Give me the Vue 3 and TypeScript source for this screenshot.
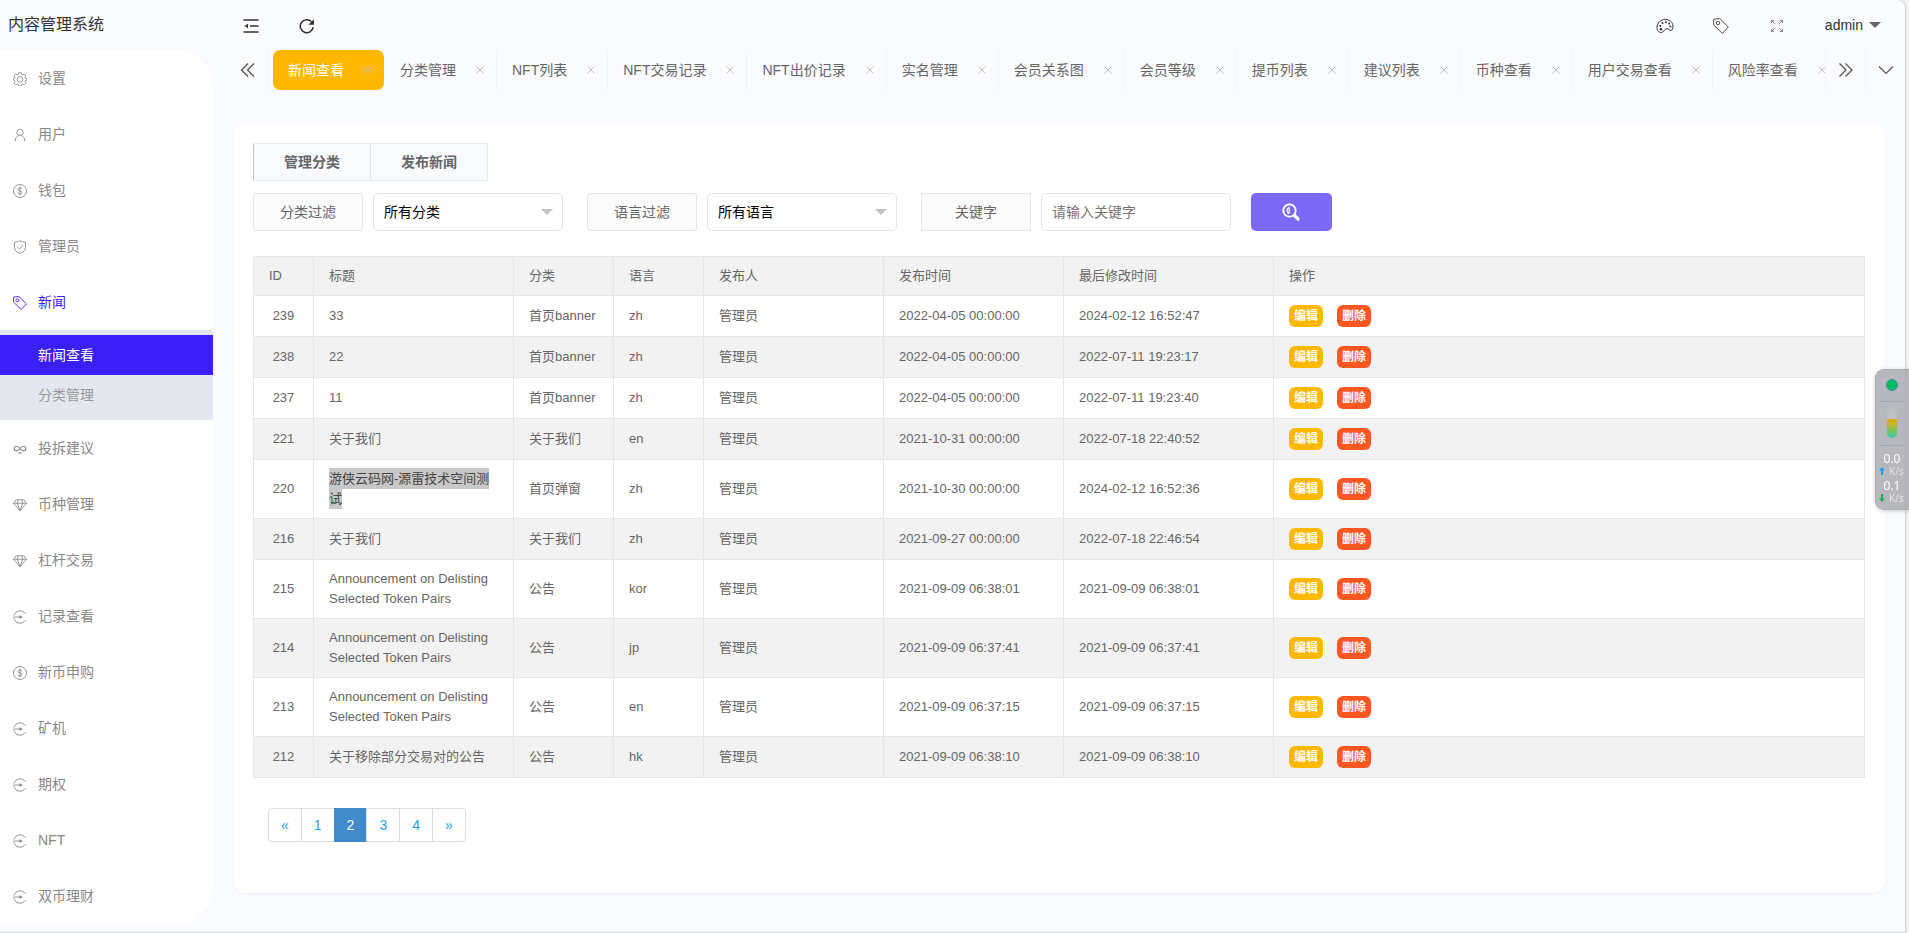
<script setup lang="ts">
import { ref } from 'vue'

type IconName = 'gear' | 'user' | 'dollar' | 'shield' | 'tag' | 'link' | 'diamond' | 'enter'

interface MenuEntry {
  label: string
  icon: IconName
  children?: string[]
}

interface NewsRow {
  id: number
  title: string
  category: string
  lang: string
  created: string
  updated: string
  marked?: boolean
}

const menu: MenuEntry[] = [
  { label: '设置', icon: 'gear' },
  { label: '用户', icon: 'user' },
  { label: '钱包', icon: 'dollar' },
  { label: '管理员', icon: 'shield' },
  { label: '新闻', icon: 'tag', children: ['新闻查看', '分类管理'] },
  { label: '投拆建议', icon: 'link' },
  { label: '币种管理', icon: 'diamond' },
  { label: '杠杆交易', icon: 'diamond' },
  { label: '记录查看', icon: 'enter' },
  { label: '新币申购', icon: 'dollar' },
  { label: '矿机', icon: 'enter' },
  { label: '期权', icon: 'enter' },
  { label: 'NFT', icon: 'enter' },
  { label: '双币理财', icon: 'enter' },
]

const tabs: string[] = [
  '新闻查看', '分类管理', 'NFT列表', 'NFT交易记录', 'NFT出价记录', '实名管理', '会员关系图',
  '会员等级', '提币列表', '建议列表', '币种查看', '用户交易查看', '风险率查看',
]

const delisting = 'Announcement on Delisting Selected Token Pairs'
const rows: NewsRow[] = [
  { id: 239, title: '33', category: '首页banner', lang: 'zh', created: '2022-04-05 00:00:00', updated: '2024-02-12 16:52:47' },
  { id: 238, title: '22', category: '首页banner', lang: 'zh', created: '2022-04-05 00:00:00', updated: '2022-07-11 19:23:17' },
  { id: 237, title: '11', category: '首页banner', lang: 'zh', created: '2022-04-05 00:00:00', updated: '2022-07-11 19:23:40' },
  { id: 221, title: '关于我们', category: '关于我们', lang: 'en', created: '2021-10-31 00:00:00', updated: '2022-07-18 22:40:52' },
  { id: 220, title: '游侠云码网-源雷技术空间测试', category: '首页弹窗', lang: 'zh', created: '2021-10-30 00:00:00', updated: '2024-02-12 16:52:36', marked: true },
  { id: 216, title: '关于我们', category: '关于我们', lang: 'zh', created: '2021-09-27 00:00:00', updated: '2022-07-18 22:46:54' },
  { id: 215, title: delisting, category: '公告', lang: 'kor', created: '2021-09-09 06:38:01', updated: '2021-09-09 06:38:01' },
  { id: 214, title: delisting, category: '公告', lang: 'jp', created: '2021-09-09 06:37:41', updated: '2021-09-09 06:37:41' },
  { id: 213, title: delisting, category: '公告', lang: 'en', created: '2021-09-09 06:37:15', updated: '2021-09-09 06:37:15' },
  { id: 212, title: '关于移除部分交易对的公告', category: '公告', lang: 'hk', created: '2021-09-09 06:38:10', updated: '2021-09-09 06:38:10' },
]

const pages: string[] = ['«', '1', '2', '3', '4', '»']
const currentPage = ref('2')
const activeTab = ref('新闻查看')
const keyword = ref('')
</script>

<template>
  <div class="frame">
    <aside class="side">
      <h1 class="brand">内容管理系统</h1>
      <nav class="menu">
        <template v-for="item in menu" :key="item.label">
          <a href="#" class="menu-item" :class="{ open: item.children }">
            <svg class="menu-icon" viewBox="0 0 16 16">
              <template v-if="item.icon === 'gear'">
                <path d="M6.6.8h2.8l.5 2.1 1.100.5 1.900-1.100 1.900 1.900-1.100 1.900.5 1.100 2 .5v1.600l-2 .5-.5 1.100 1.100 1.900-1.900 1.900-1.900-1.100-1.100.5-.5 2.100H6.600l-.5-2.100-1.100-.5-1.900 1.100-1.900-1.900 1.100-1.900-.5-1.100-1.500-.5V7.700l1.500-.5.5-1.100-1.100-1.900 1.900-1.900L5 3.400l1.100-.5z" />
                <circle cx="8" cy="8.500" r="3.200" />
              </template>
              <template v-else-if="item.icon === 'user'">
                <circle cx="8" cy="5" r="3.600" />
                <path d="M2.500 15c.2-3.800 1.800-5.600 4-6.300M13.500 15c-.2-3.800-1.800-5.600-4-6.300" />
              </template>
              <template v-else-if="item.icon === 'dollar'">
                <circle cx="8" cy="8" r="7.400" />
                <path d="M10.300 6c-.2-1-1.100-1.500-2.300-1.500-1.300 0-2.300.6-2.300 1.700C5.700 8.800 10.400 7.200 10.400 9.800c0 1.100-1 1.700-2.400 1.700s-2.300-.6-2.500-1.700M8 3v10" />
              </template>
              <template v-else-if="item.icon === 'shield'">
                <path d="M8 .8c2 1.200 4 1.600 6.300 1.700v6c0 3.200-2.600 5.500-6.300 6.900C4.300 14 1.700 11.700 1.700 8.500v-6C4 2.400 6 2 8 .8z" />
                <path d="M4.800 7.800l2.500 2.500 4.300-4.500" />
              </template>
              <template v-else-if="item.icon === 'tag'">
                <path d="M.7 1.200L6.800.6l8.600 8.400-6 6.400L.7 7z" />
                <circle cx="5" cy="5" r="1.700" />
              </template>
              <template v-else-if="item.icon === 'link'">
                <path d="M8 7.500C6.800 5.500 5.500 4.800 4 4.800a2.700 2.700 0 0 0 0 5.400c1.500 0 2.800-.7 4-2.700s2.500-2.700 4-2.700a2.700 2.700 0 0 1 0 5.400c-1.300 0-2.500-.5-3.500-1.900M6 12.500h4" stroke-width="1.300" />
              </template>
              <template v-else-if="item.icon === 'diamond'">
                <path d="M3.500 2h9L15.500 6 8 14.500.5 6zM.5 6h15M5 6l3 8.500L11 6M5 6l1-4M11 6l-1-4" />
              </template>
              <template v-else>
                <path d="M14.200 4.500A7.200 7.200 0 0 0 1 6.500M1 9.500a7.200 7.200 0 0 0 13.200 2M0 8h9" />
                <path class="solid" d="M7.500 5.800L11 8l-3.500 2.200z" />
              </template>
            </svg>
            <span>{{ item.label }}</span>
          </a>
          <div v-if="item.children" class="submenu">
            <a
              v-for="child in item.children"
              :key="child"
              href="#"
              class="sub-item"
              :class="{ current: child === activeTab }"
            >{{ child }}</a>
          </div>
        </template>
      </nav>
    </aside>

    <main class="main">
      <header class="topbar">
        <button type="button" class="tool" aria-label="收起菜单">
          <svg width="16" height="16" viewBox="0 0 16 16" class="stroke-dark">
            <path d="M.5 2h15M7 8h8.500M.5 14h15" stroke-width="1.400" />
            <path class="dark" d="M5 5.800v4.400L1.500 8z" />
          </svg>
        </button>
        <button type="button" class="tool" aria-label="刷新">
          <svg width="16" height="16" viewBox="0 0 16 16" class="stroke-dark">
            <path d="M14.200 9.200A6.500 6.500 0 1 1 12.500 3.700" stroke-width="1.500" />
            <path class="dark" d="M15 1.200v5.600H9.400z" />
          </svg>
        </button>
        <span class="spacer"></span>
        <button type="button" class="tool" aria-label="主题">
          <svg width="18" height="16" viewBox="0 0 18 16" class="stroke-dark">
            <path d="M5.500 14.500C3 15 1 12.500 1 9.500 1 5 4.500 1.500 9.300 1.500c4.500 0 7.700 3 7.700 6.700 0 2.300-.7 4.300-2.200 4.300-1.700 0-1.800-1.900-3.800-1.900-2.500 0-2.500 3.300-5.500 3.900z" />
            <circle class="dark" cx="4.300" cy="8" r="1" />
            <circle class="dark" cx="6.500" cy="5" r="1" />
            <circle class="dark" cx="10" cy="4.200" r="1" />
            <circle class="dark" cx="13.200" cy="5.500" r="1" />
            <circle class="dark" cx="14.300" cy="8.500" r="1" />
            <circle class="dark" cx="5" cy="11.300" r="1.300" />
          </svg>
        </button>
        <button type="button" class="tool" aria-label="便签">
          <svg width="16" height="16" viewBox="0 0 16 16" class="stroke-mid">
            <path d="M.7 1.200L6.800.6l8.600 8.400-6 6.400L.7 7z" />
            <circle cx="5" cy="5" r="1.700" />
          </svg>
        </button>
        <button type="button" class="tool" aria-label="全屏">
          <svg width="14" height="14" viewBox="0 0 14 14" class="stroke-light">
            <path d="M1.500 4V1.500H4M1.500 1.500l3.500 3.500M10 1.500h2.500V4M12.500 1.500L9 5M1.500 10v2.500H4M1.500 12.500L5 9M12.500 10v2.500H10M12.500 12.500L9 9" />
          </svg>
        </button>
        <button type="button" class="account">
          admin
          <svg width="12" height="6" viewBox="0 0 12 6"><path d="M0 0h12L6 6z" /></svg>
        </button>
      </header>

      <div class="tabbar">
        <button type="button" class="scroll prev" aria-label="向左">
          <svg width="16" height="16" viewBox="0 0 16 16" class="stroke-mid"><path d="M8 1.500L1.500 8 8 14.500M14 1.500L7.500 8l6.500 6.500" stroke-width="1.300" /></svg>
        </button>
        <ul class="tabs">
          <li v-for="tab in tabs" :key="tab" class="tab" :class="{ on: tab === activeTab }">
            <a href="#" @click.prevent="activeTab = tab">{{ tab }}</a>
            <button type="button" class="close" :aria-label="'关闭' + tab">
              <svg width="8" height="8" viewBox="0 0 8 8"><path d="M.5.5l7 7M7.500.5l-7 7" /></svg>
            </button>
          </li>
        </ul>
        <button type="button" class="scroll" aria-label="向右">
          <svg width="16" height="16" viewBox="0 0 16 16" class="stroke-mid"><path d="M1.500 1.500L8 8l-6.500 6.500M7.500 1.500L14 8l-6.500 6.500" stroke-width="1.300" /></svg>
        </button>
        <button type="button" class="scroll" aria-label="更多">
          <svg width="16" height="16" viewBox="0 0 16 16" class="stroke-mid"><path d="M1 4.500L8 11.500l7-7" stroke-width="1.200" /></svg>
        </button>
      </div>

      <section class="card">
        <div class="actions">
          <button type="button">管理分类</button>
          <button type="button">发布新闻</button>
        </div>

        <form class="filters" @submit.prevent>
          <div class="field">
            <label for="category">分类过滤</label>
            <div class="select">
              <select id="category"><option>所有分类</option></select>
              <svg width="12" height="6" viewBox="0 0 12 6"><path d="M0 0h12L6 6z" /></svg>
            </div>
          </div>
          <div class="field">
            <label for="language">语言过滤</label>
            <div class="select">
              <select id="language"><option>所有语言</option></select>
              <svg width="12" height="6" viewBox="0 0 12 6"><path d="M0 0h12L6 6z" /></svg>
            </div>
          </div>
          <div class="field">
            <label for="keyword">关键字</label>
            <input id="keyword" v-model="keyword" type="text" placeholder="请输入关键字">
          </div>
          <button type="submit" class="search" aria-label="搜索">
            <svg width="18" height="18" viewBox="0 0 18 18">
              <circle cx="7.500" cy="7.500" r="6.200" stroke-width="1.800" />
              <path d="M12.500 12.500l3.500 3.500" stroke-width="3.200" />
              <path d="M7 4.500C4.500 5 4.500 10 7 10.500M7.200 5v5" stroke-width="1.200" />
            </svg>
          </button>
        </form>

        <table class="grid">
          <colgroup>
            <col class="w-id"><col class="w-title"><col class="w-cat"><col class="w-lang">
            <col class="w-date"><col class="w-date"><col class="w-edit"><col>
          </colgroup>
          <thead>
            <tr>
              <th>ID</th><th>标题</th><th>分类</th><th>语言</th>
              <th>发布人</th><th>发布时间</th><th>最后修改时间</th><th>操作</th>
            </tr>
          </thead>
          <tbody>
            <tr v-for="row in rows" :key="row.id">
              <td class="center">{{ row.id }}</td>
              <td><span :class="{ marked: row.marked }">{{ row.title }}</span></td>
              <td>{{ row.category }}</td>
              <td>{{ row.lang }}</td>
              <td>管理员</td>
              <td>{{ row.created }}</td>
              <td>{{ row.updated }}</td>
              <td>
                <div class="ops">
                  <button type="button" class="edit">编辑</button>
                  <button type="button" class="remove">删除</button>
                </div>
              </td>
            </tr>
          </tbody>
        </table>

        <nav class="pager" aria-label="分页">
          <a v-for="p in pages" :key="p" href="#" :class="{ active: p === currentPage }">{{ p }}</a>
        </nav>
      </section>
    </main>

    <div class="monitor">
      <div class="cell"><span class="dot"></span></div>
      <div class="cell level"><span class="tube"></span></div>
      <div class="speeds">
        <div class="speed">
          <span class="num">0.0</span>
          <span class="unit">
            <svg width="6" height="8" viewBox="0 0 6 8" class="up"><path d="M3 0l3 3.500H4V8H2V3.500H0z" /></svg>K/s
          </span>
        </div>
        <div class="speed">
          <span class="num">0.1</span>
          <span class="unit">
            <svg width="6" height="8" viewBox="0 0 6 8" class="down"><path d="M3 8L0 4.500h2V0h2v4.500h2z" /></svg>K/s
          </span>
        </div>
      </div>
    </div>
  </div>
</template>

<style>
body {
  margin: 0;
  background: #f2f3f4;
}
</style>

<style scoped>
.frame,
.frame * {
  box-sizing: border-box;
}

.frame {
  display: flex;
  min-height: 100vh;
  margin-right: 4px;
  background: #f9fbff;
  border-bottom: 1px solid #d2d5d6;
  border-top-right-radius: 8px;
  box-shadow: 1px 0 2px #c9cbce;
  color: #666;
  font: 14px/20px "Liberation Sans", "Noto Sans CJK SC", sans-serif;
}

button,
input,
select {
  margin: 0;
  font: inherit;
}

button {
  padding: 0;
  border: 0;
  background: none;
  color: inherit;
  cursor: pointer;
}

a {
  color: inherit;
  text-decoration: none;
}

svg {
  display: block;
  flex: none;
}

/* Sidebar */
.side {
  flex: none;
  width: 213px;
  padding-bottom: 8px;
}

.brand {
  height: 50px;
  margin: 0;
  padding-left: 8px;
  color: #333;
  font-size: 16px;
  font-weight: 400;
  line-height: 50px;
}

.menu {
  background: #fff;
  border-radius: 0 36px 36px 0;
}

.menu-item {
  display: flex;
  align-items: center;
  gap: 11px;
  height: 56px;
  padding-left: 13px;
  color: #888;
}

.menu-item.open {
  color: #3b1ff7;
}

.menu-icon {
  width: 14px;
  height: 14px;
  margin-top: 2px;
  fill: none;
  stroke: currentColor;
  stroke-width: 1;
}

.menu-icon .solid {
  fill: currentColor;
  stroke: none;
}

.submenu {
  padding: 5px 0;
  background: #e4e7ee;
  border-radius: 0 2px 2px 0;
}

.sub-item {
  display: block;
  height: 40px;
  padding-left: 38px;
  color: #999;
  line-height: 40px;
}

.sub-item.current {
  background: #3b1ff7;
  color: #fff;
}

/* Top bar */
.main {
  flex: 1;
  min-width: 0;
  padding-bottom: 39px;
}

.topbar {
  display: flex;
  align-items: center;
  height: 50px;
  padding: 2px 24px 0 10px;
}

.tool {
  display: flex;
  align-items: center;
  justify-content: center;
  width: 56px;
  height: 40px;
}

.spacer {
  flex: 1;
}

.account {
  display: flex;
  align-items: center;
  gap: 6px;
  margin-left: 20px;
  padding-bottom: 2px;
  color: #333;
}

.account svg {
  fill: #666;
}

.stroke-dark {
  fill: none;
  stroke: #333;
}

.stroke-mid {
  fill: none;
  stroke: #555;
}

.stroke-light {
  fill: none;
  stroke: #888;
}

.dark {
  fill: #333;
  stroke: none;
}

/* Tabs */
.tabbar {
  display: flex;
  height: 40px;
  padding-left: 15px;
}

.scroll {
  display: flex;
  flex: none;
  align-items: center;
  justify-content: center;
  width: 40px;
  border-left: 1px solid #f3f4f6;
}

.scroll.prev {
  border-right: 1px solid #f3f4f6;
  border-left: 0;
}

.tabs {
  display: flex;
  flex: 1;
  min-width: 0;
  margin: 0;
  padding: 0 0 0 5px;
  overflow: hidden;
  list-style: none;
}

.tab {
  display: flex;
  flex: none;
  align-items: center;
  gap: 20px;
  padding: 0 12px 0 15px;
  border-right: 1px solid #f3f4f6;
}

.tab.on {
  margin-right: 1px;
  background: #ffb800;
  border-right: 0;
  border-radius: 7px;
  color: #fff;
}

.close svg {
  fill: none;
  stroke: #c2c2c2;
}

/* Content card */
.card {
  margin: 35px 20px 0;
  padding: 18px 20px 51px;
  background: #fff;
  border-radius: 12px;
  box-shadow: 0 1px 2px #eceef2;
}

.actions {
  display: flex;
}

.actions button {
  height: 38px;
  padding: 0 30px;
  background: #f9fbff;
  border: 1px solid #e0ebef;
  border-left-width: 0;
  border-radius: 0 2px 2px 0;
  font-weight: 700;
}

.actions button:first-child {
  border-left: 1px solid #c0c4c8;
  border-radius: 2px 0 0 2px;
}

.filters {
  display: flex;
  gap: 20px;
  margin-top: 12px;
}

.field {
  display: flex;
  gap: 10px;
}

.field + .field {
  margin-left: 4px;
}

.field label {
  width: 110px;
  height: 38px;
  background: #fbfbfb;
  border: 1px solid #e6e6e6;
  border-radius: 2px;
  line-height: 36px;
  text-align: center;
}

.select {
  position: relative;
}

.select svg {
  position: absolute;
  top: 16px;
  right: 10px;
  fill: #c2c2c2;
  pointer-events: none;
}

.field select,
.field input {
  width: 190px;
  height: 38px;
  padding: 0 10px;
  appearance: none;
  background: #fff;
  border: 1px solid #e6e6e6;
  border-radius: 5px;
  color: #000;
}

.field input::placeholder {
  color: #757575;
}

.search {
  display: flex;
  align-items: center;
  justify-content: center;
  width: 81px;
  height: 38px;
  padding-right: 2px;
  background: #7c69f8;
  border-radius: 5px;
}

.search svg {
  fill: none;
  stroke: #fff;
  stroke-linecap: round;
}

/* News table */
.grid {
  width: 100%;
  margin-top: 25px;
  border-collapse: collapse;
  table-layout: fixed;
  font-size: 13px;
}

.w-id { width: 60px; }
.w-title { width: 200px; }
.w-cat { width: 100px; }
.w-lang { width: 90px; }
.w-date { width: 180px; }
.w-edit { width: 210px; }

.grid th,
.grid td {
  padding: 9px 15px;
  border: 1px solid #e6e6e6;
  font-weight: 400;
  text-align: left;
}

.grid th,
.grid tbody tr:nth-child(even) {
  background: #f2f2f2;
}

.grid .center {
  text-align: center;
}

.marked {
  padding: 3px 0;
  background: #c8c8c8;
  color: #444;
}

.ops {
  display: flex;
  gap: 14px;
}

.ops button {
  height: 22px;
  padding: 0 5px;
  border-radius: 6px;
  color: #fff;
  font-size: 12px;
  font-weight: 700;
  line-height: 22px;
}

.ops .edit {
  background: #ffb800;
}

.ops .remove {
  background: #ff5722;
}

/* Pagination */
.pager {
  display: flex;
  margin: 30px 0 0 16px;
}

.pager a {
  margin-left: -1px;
  padding: 6px 12px;
  border: 1px solid #ddd;
  color: #1e9fff;
}

.pager a:first-child {
  border-radius: 4px 0 0 4px;
}

.pager a:last-child {
  border-radius: 0 4px 4px 0;
}

.pager .active {
  background: #428bca;
  border-color: #428bca;
  color: #fff;
}

/* Floating system monitor */
.monitor {
  position: fixed;
  top: 369px;
  right: 0;
  width: 34px;
  padding: 0 4px 6px 3px;
  background: rgba(166, 168, 174, 0.8);
  border: 1px solid #adaeb2;
  border-right: 0;
  border-radius: 9px 0 0 9px;
  box-shadow: 0 1px 4px rgba(0, 0, 0, 0.2);
}

.cell {
  display: flex;
  justify-content: center;
  height: 32px;
  padding-top: 9px;
  border-bottom: 1px solid #a3a8ad;
}

.level {
  height: 44px;
  padding-top: 6px;
}

.dot {
  width: 12px;
  height: 12px;
  background: #05bb62;
  border: 1px solid #3f8fa8;
  border-radius: 50%;
}

.tube {
  width: 10px;
  height: 30px;
  background: linear-gradient(#bfc1c5 36%, #dcaa18 36%, #c4b331 55%, #6cc86c 80%, #3cc4b4);
  border-radius: 5px;
}

.speeds {
  display: flex;
  flex-direction: column;
  gap: 3px;
  padding-top: 6px;
  color: #fff;
  font: 12px/14px "Noto Sans", sans-serif;
}

.speed {
  display: flex;
  flex-direction: column;
}

.num {
  text-align: center;
}

.unit {
  display: flex;
  align-items: center;
  gap: 4px;
  height: 10px;
  color: #e2e3e5;
  font-size: 10px;
}

.up {
  fill: #1ba1f5;
}

.down {
  fill: #0cb45f;
}
</style>
